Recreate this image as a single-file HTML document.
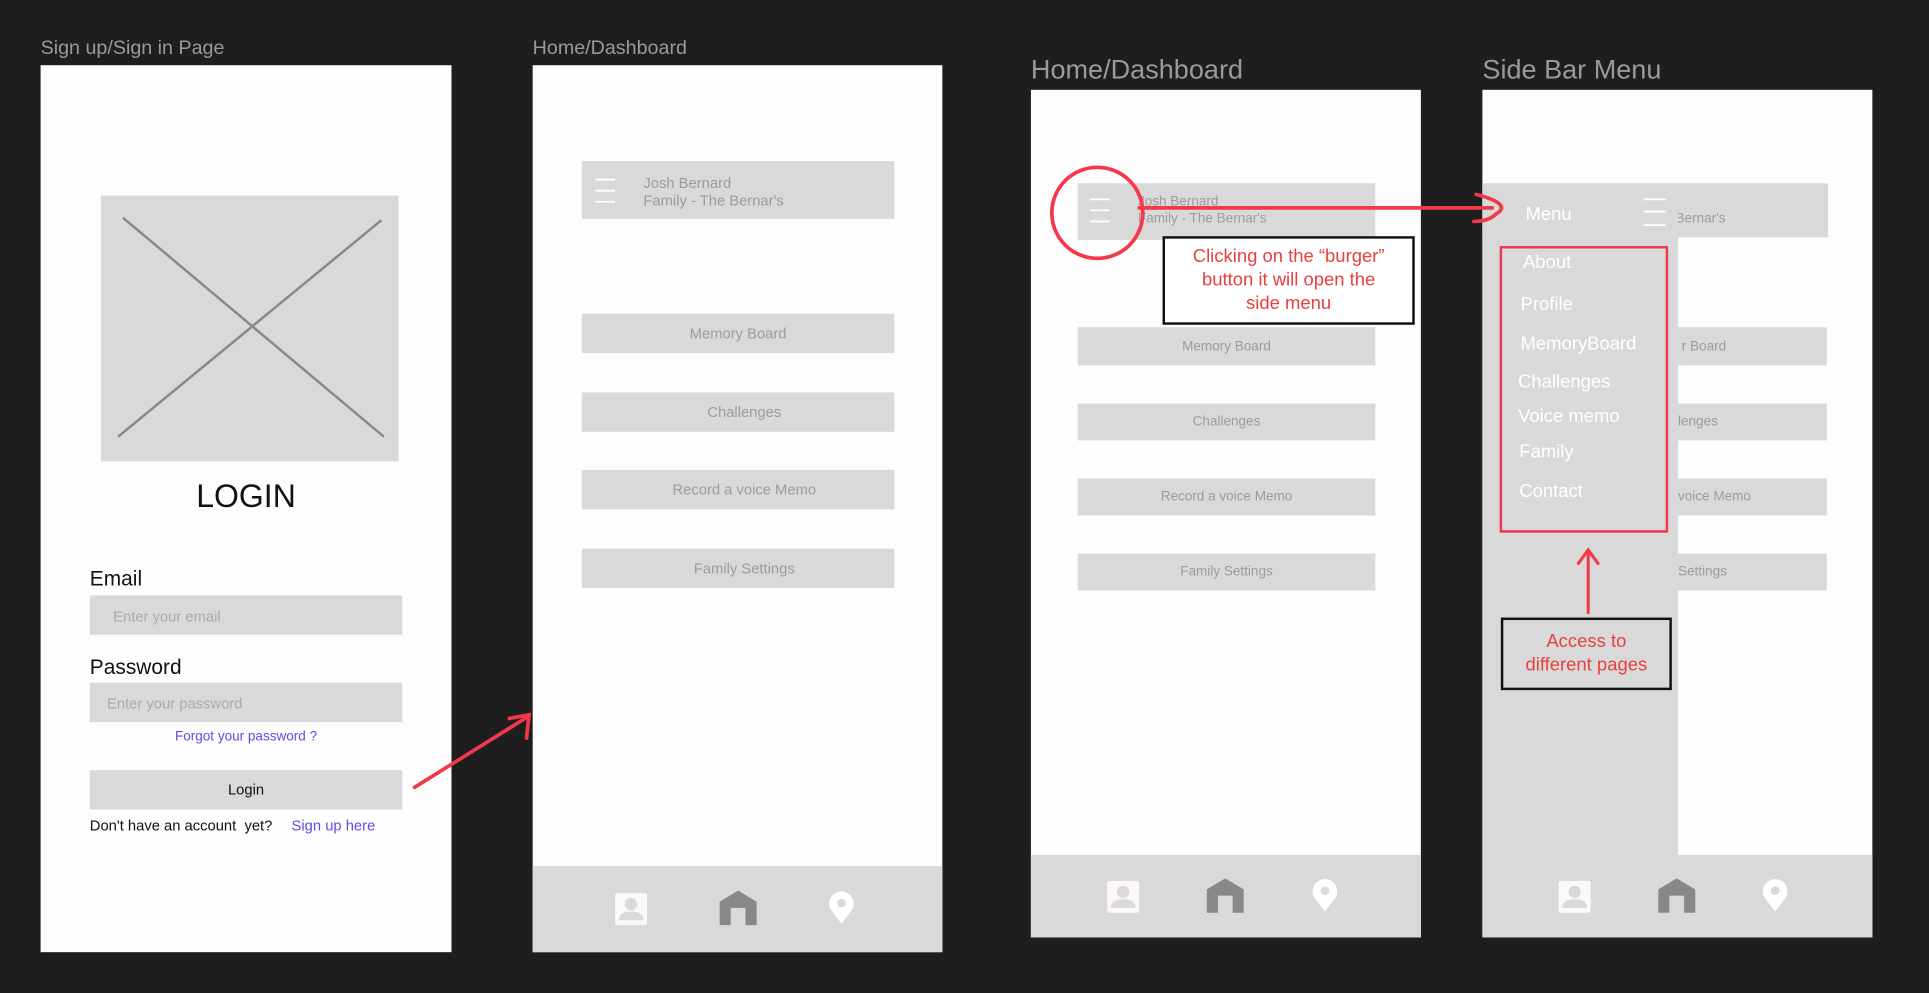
<!DOCTYPE html>
<html><head><meta charset="utf-8"><style>
*{margin:0;padding:0;box-sizing:border-box}
body{width:1929px;height:993px;background:#1e1e1e;overflow:hidden;font-family:"Liberation Sans",sans-serif}
#w{position:absolute;left:0;top:0;width:1568px;height:807px;transform:scale(1.2302);transform-origin:0 0}
.a{position:absolute}
.lbl{color:#9a9a9a;font-size:16px}
.fr{background:#fdfdfd}
.g{background:#d9d9d9}
.bt{color:#9c9c9c;font-size:12px;text-align:center;display:flex;align-items:center;justify-content:center}
.mi{color:#fff;font-size:15px;position:absolute}
.red{color:#e8403f}
</style></head><body><div id="w">
<!-- Frame 1 -->
<div class="a lbl" style="left:33px;top:31px">Sign up/Sign in Page</div>
<div class="a fr" style="left:33px;top:53px;width:334px;height:721px"></div>
<div class="a g" style="left:82px;top:159px;width:242px;height:216px"></div>
<svg class="a" style="left:82px;top:159px" width="242" height="216"><path d="M18 18L230 196M228 20L14 196" stroke="#888" stroke-width="2"/></svg>
<div class="a" style="left:33px;top:388px;width:334px;text-align:center;font-size:26px;color:#111">LOGIN</div>
<div class="a" style="left:73px;top:461px;font-size:17px;color:#111">Email</div>
<div class="a g" style="left:73px;top:484px;width:254px;height:32px;color:#aaa;font-size:12px;padding:10px 0 0 19px">Enter your email</div>
<div class="a" style="left:73px;top:533px;font-size:17px;color:#111">Password</div>
<div class="a g" style="left:73px;top:555px;width:254px;height:32px;color:#aaa;font-size:12px;padding:10px 0 0 14px">Enter your password</div>
<div class="a" style="left:73px;top:593px;width:254px;text-align:center;font-size:11px;color:#5a4ee6">Forgot your password ?</div>
<div class="a g bt" style="left:73px;top:626px;width:254px;height:32px;color:#111;font-size:12px">Login</div>
<div class="a" style="left:73px;top:664px;font-size:12px;color:#111">Don't have an account&nbsp; yet?</div>
<div class="a" style="left:237px;top:664px;font-size:12px;color:#5a4ee6">Sign up here</div>
<svg class="a" style="left:330px;top:570px" width="110" height="80"><path d="M7 70L100 12M84 14L100 11L98 30" stroke="#f2384a" stroke-width="3" fill="none" stroke-linecap="round"/></svg>
<!-- Frame 2 -->
<div class="a lbl" style="left:433px;top:31px">Home/Dashboard</div>
<div class="a fr" style="left:433px;top:53px;width:333px;height:721px"></div>
<div class="a g" style="left:473px;top:131px;width:254px;height:47px"></div>
<svg class="a" style="left:482px;top:144px" width="20" height="24"><path d="M2 2H18M2 11H18M2 20H18" stroke="#fff" stroke-width="1.5"/></svg>
<div class="a" style="left:523px;top:142px;font-size:12px;color:#9c9c9c;line-height:14px">Josh Bernard<br>Family - The Bernar's</div>
<div class="a g bt" style="left:473px;top:255px;width:254px;height:32px">Memory Board</div>
<div class="a g bt" style="left:473px;top:319px;width:254px;height:32px;padding-left:10px">Challenges</div>
<div class="a g bt" style="left:473px;top:382px;width:254px;height:32px;padding-left:10px">Record a voice Memo</div>
<div class="a g bt" style="left:473px;top:446px;width:254px;height:32px;padding-left:10px">Family Settings</div>
<div class="a g" style="left:433px;top:704px;width:333px;height:70px"></div>
<!-- Frame 3 -->
<div class="a lbl" style="left:838px;top:44px;font-size:22px">Home/Dashboard</div>
<div class="a fr" style="left:838px;top:73px;width:317px;height:689px"></div>
<div class="a g" style="left:876px;top:149px;width:242px;height:46px"></div>
<svg class="a" style="left:884px;top:160px" width="20" height="24"><path d="M2 2H18M2 11H18M2 20H18" stroke="#fff" stroke-width="1.5"/></svg>
<div class="a" style="left:925px;top:157px;font-size:11px;color:#9c9c9c;line-height:14px">Josh Bernard<br>Family - The Bernar's</div>
<div class="a g bt" style="left:876px;top:266px;width:242px;height:31px;font-size:11px">Memory Board</div>
<div class="a g bt" style="left:876px;top:328px;width:242px;height:30px;font-size:11px">Challenges</div>
<div class="a g bt" style="left:876px;top:389px;width:242px;height:30px;font-size:11px">Record a voice Memo</div>
<div class="a g bt" style="left:876px;top:450px;width:242px;height:30px;font-size:11px">Family Settings</div>
<div class="a g" style="left:838px;top:695px;width:317px;height:67px"></div>
<!-- Frame 4 -->
<div class="a lbl" style="left:1205px;top:44px;font-size:22px">Side Bar Menu</div>
<div class="a fr" style="left:1205px;top:73px;width:317px;height:689px"></div>
<div class="a g" style="left:1205px;top:149px;width:281px;height:44px"></div>
<div class="a" style="left:1362px;top:172px;font-size:11px;color:#9c9c9c">Bernar's</div>
<div class="a g bt" style="left:1364px;top:266px;width:121px;height:31px;font-size:11px;justify-content:flex-start">&nbsp;r Board</div>
<div class="a g bt" style="left:1364px;top:328px;width:121px;height:30px;font-size:11px;justify-content:flex-start">lenges</div>
<div class="a g bt" style="left:1364px;top:389px;width:121px;height:30px;font-size:11px;justify-content:flex-start">voice Memo</div>
<div class="a g bt" style="left:1364px;top:450px;width:121px;height:30px;font-size:11px;justify-content:flex-start">Settings</div>
<div class="a g" style="left:1205px;top:149px;width:159px;height:546px"></div>
<div class="mi" style="left:1240px;top:166px">Menu</div>
<svg class="a" style="left:1334px;top:160px" width="22" height="26"><path d="M2 2H20M2 12H20M2 23H20" stroke="#fff" stroke-width="1.5"/></svg>
<div class="a" style="left:1219px;top:200px;width:137px;height:233px;border:2px solid #f2384a"></div>
<div class="mi" style="left:1238px;top:205px">About</div>
<div class="mi" style="left:1236px;top:239px">Profile</div>
<div class="mi" style="left:1236px;top:271px">MemoryBoard</div>
<div class="mi" style="left:1234px;top:302px">Challenges</div>
<div class="mi" style="left:1234px;top:330px">Voice memo</div>
<div class="mi" style="left:1235px;top:359px">Family</div>
<div class="mi" style="left:1235px;top:391px">Contact</div>
<svg class="a" style="left:1278px;top:440px" width="26" height="62"><path d="M13 58V8M5 18L13 7L21 18" stroke="#f2384a" stroke-width="2.5" fill="none" stroke-linecap="round"/></svg>
<div class="a red" style="left:1220px;top:502px;width:139px;height:59px;border:2px solid #111;font-size:15px;text-align:center;line-height:19px;padding-top:8px">Access to<br>different pages</div>
<div class="a g" style="left:1205px;top:695px;width:317px;height:67px"></div>
<!-- annotations frame 3 -->
<svg class="a" style="left:850px;top:130px" width="380" height="90"><circle cx="42" cy="43" r="37" stroke="#f2384a" stroke-width="3" fill="none"/><path d="M76 39H363M350 28Q380 36 366 44Q360 50 348 50" stroke="#f2384a" stroke-width="3" fill="none" stroke-linecap="round"/></svg>
<div class="a red" style="left:945px;top:192px;width:205px;height:72px;border:2px solid #111;background:#fff;font-size:15px;text-align:center;line-height:19px;padding-top:5px">Clicking on the “burger”<br>button it will open the<br>side menu</div>
<!-- icons -->
<svg width="0" height="0" style="position:absolute"><defs>
<g id="p"><rect x="-13" y="-13" width="26" height="26" rx="2" fill="#fdf8f8"/><circle cx="0" cy="-4" r="5" fill="#d9d9d9"/><path d="M-10 9Q-10 2 0 2Q10 2 10 9Z" fill="#d9d9d9"/></g>
<g id="h"><path d="M-15 14V-5L0 -14L15 -5V14H6V0H-6V14Z" fill="#888"/></g>
<g id="l"><path d="M0 14L-9 2A10 10 0 1 1 9 2Z" fill="#fff"/><circle cx="0" cy="-3" r="3.5" fill="#d9d9d9"/></g>
</defs></svg>
<svg class="a" style="left:0;top:0" width="1568" height="807">
<use href="#p" x="513" y="739"/><use href="#h" x="600" y="738"/><use href="#l" x="684" y="737"/>
<use href="#p" x="913" y="729"/><use href="#h" x="996" y="728"/><use href="#l" x="1077" y="727"/>
<use href="#p" x="1280" y="729"/><use href="#h" x="1363" y="728"/><use href="#l" x="1443" y="727"/>
</svg>
</div></body></html>
